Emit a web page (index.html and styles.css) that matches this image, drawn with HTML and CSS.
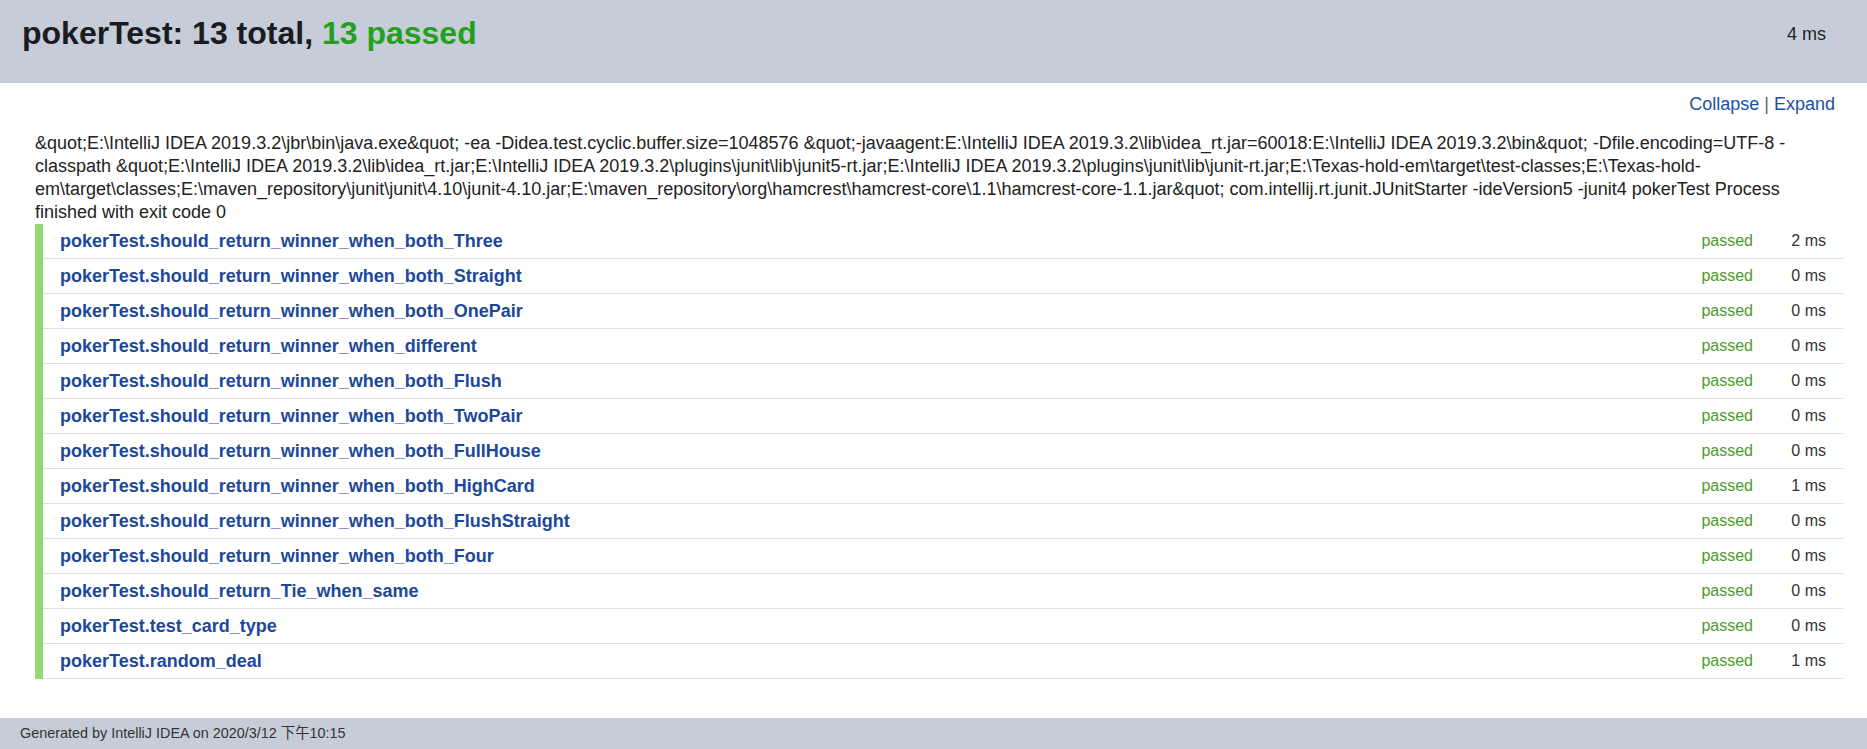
FILE: index.html
```html
<!DOCTYPE html>
<html lang="en">
<head>
<meta charset="utf-8">
<title>pokerTest</title>
<link rel="stylesheet" href="styles.css">
</head>
<body>
<header class="header">
  <h1 class="title">pokerTest: 13 total, <span class="title-passed">13 passed</span></h1>
  <div class="total-time">4 ms</div>
</header>
<main class="main">
  <div class="toolbar"><a class="link" href="#">Collapse</a> | <a class="link" href="#">Expand</a></div>
  <div class="command">&amp;quot;E:\IntelliJ IDEA 2019.3.2\jbr\bin\java.exe&amp;quot; -ea -Didea.test.cyclic.buffer.size=1048576 &amp;quot;-javaagent:E:\IntelliJ IDEA 2019.3.2\lib\idea_rt.jar=60018:E:\IntelliJ IDEA 2019.3.2\bin&amp;quot; -Dfile.encoding=UTF-8 -classpath &amp;quot;E:\IntelliJ IDEA 2019.3.2\lib\idea_rt.jar;E:\IntelliJ IDEA 2019.3.2\plugins\junit\lib\junit5-rt.jar;E:\IntelliJ IDEA 2019.3.2\plugins\junit\lib\junit-rt.jar;E:\Texas-hold-em\target\test-classes;E:\Texas-hold-em\target\classes;E:\maven_repository\junit\junit\4.10\junit-4.10.jar;E:\maven_repository\org\hamcrest\hamcrest-core\1.1\hamcrest-core-1.1.jar&amp;quot; com.intellij.rt.junit.JUnitStarter -ideVersion5 -junit4 pokerTest Process finished with exit code 0</div>
  <div class="tests">
    <div class="test"><a class="test-name" href="#">pokerTest.should_return_winner_when_both_Three</a><span class="status">passed</span><span class="time">2 ms</span></div>
    <div class="test"><a class="test-name" href="#">pokerTest.should_return_winner_when_both_Straight</a><span class="status">passed</span><span class="time">0 ms</span></div>
    <div class="test"><a class="test-name" href="#">pokerTest.should_return_winner_when_both_OnePair</a><span class="status">passed</span><span class="time">0 ms</span></div>
    <div class="test"><a class="test-name" href="#">pokerTest.should_return_winner_when_different</a><span class="status">passed</span><span class="time">0 ms</span></div>
    <div class="test"><a class="test-name" href="#">pokerTest.should_return_winner_when_both_Flush</a><span class="status">passed</span><span class="time">0 ms</span></div>
    <div class="test"><a class="test-name" href="#">pokerTest.should_return_winner_when_both_TwoPair</a><span class="status">passed</span><span class="time">0 ms</span></div>
    <div class="test"><a class="test-name" href="#">pokerTest.should_return_winner_when_both_FullHouse</a><span class="status">passed</span><span class="time">0 ms</span></div>
    <div class="test"><a class="test-name" href="#">pokerTest.should_return_winner_when_both_HighCard</a><span class="status">passed</span><span class="time">1 ms</span></div>
    <div class="test"><a class="test-name" href="#">pokerTest.should_return_winner_when_both_FlushStraight</a><span class="status">passed</span><span class="time">0 ms</span></div>
    <div class="test"><a class="test-name" href="#">pokerTest.should_return_winner_when_both_Four</a><span class="status">passed</span><span class="time">0 ms</span></div>
    <div class="test"><a class="test-name" href="#">pokerTest.should_return_Tie_when_same</a><span class="status">passed</span><span class="time">0 ms</span></div>
    <div class="test"><a class="test-name" href="#">pokerTest.test_card_type</a><span class="status">passed</span><span class="time">0 ms</span></div>
    <div class="test"><a class="test-name" href="#">pokerTest.random_deal</a><span class="status">passed</span><span class="time">1 ms</span></div>
  </div>
</main>
<footer class="footer">Generated by IntelliJ IDEA on 2020/3/12 下午10:15</footer>
</body>
</html>
```
FILE: styles.css
```css
html, body {
  margin: 0;
  padding: 0;
}
body {
  font-family: "Liberation Sans", Arial, "Noto Sans CJK SC", sans-serif;
  color: #222;
  background: #fff;
}
.header {
  box-sizing: border-box;
  height: 83px;
  background: #c6cdd9;
  display: flex;
  justify-content: space-between;
  align-items: flex-start;
  padding: 15px 41px 0 22px;
}
.title {
  margin: 0;
  font-size: 32px;
  font-weight: bold;
  line-height: normal;
  color: #1b1b22;
}
.title-passed {
  color: #24a01d;
}
.total-time {
  margin-top: 9px;
  font-size: 18px;
  color: #222;
}
.main {
  margin: 0 24px 0 35px;
}
.toolbar {
  padding-top: 10px;
  margin-right: 8px;
  text-align: right;
  font-size: 18px;
  line-height: 22.5px;
  color: #666;
}
.link {
  color: #2150a3;
  text-decoration: none;
}
.command {
  margin-top: 16.5px;
  padding-right: 40px;
  font-size: 18px;
  line-height: 23px;
  color: #222;
}
.tests {
  border-left: 8px solid #93d873;
}
.test {
  box-sizing: border-box;
  height: 35px;
  border-bottom: 1px solid #e0e0e0;
  display: flex;
  align-items: center;
  padding: 0 17px;
}
.test-name {
  flex: 1;
  font-size: 18px;
  font-weight: bold;
  color: #1c489b;
  text-decoration: none;
}
.status {
  font-size: 16px;
  color: #4b9c2a;
}
.time {
  width: 73px;
  text-align: right;
  font-size: 16px;
  color: #333;
}
.footer {
  margin-top: 39px;
  background: #c6cdd9;
  min-height: 40px;
  padding: 7px 20px;
  box-sizing: border-box;
  font-size: 14.4px;
  line-height: 17px;
  color: #333;
}
```
